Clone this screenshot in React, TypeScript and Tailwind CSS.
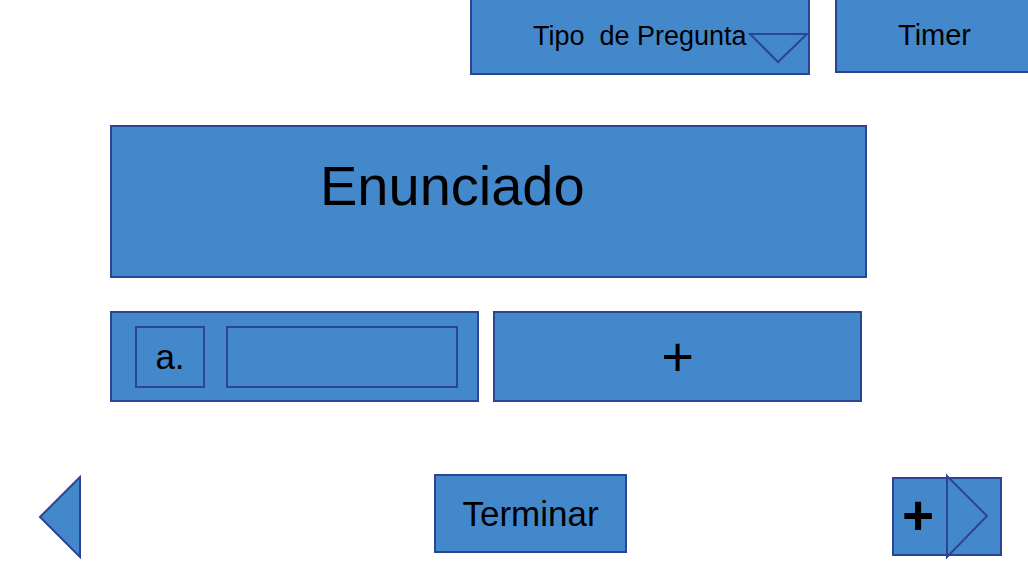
import React from 'react';

// shared look of every block in the mockup
const box = 'bg-[#4488cc] border-2 border-[#2b4594]';

const App: React.FC = () => {
  return (
    <div className="w-[1028px] h-[585px] overflow-hidden bg-white text-black font-['Liberation_Sans',Arial,sans-serif]">
      {/* top bar: question type + timer */}
      <div className="flex items-start -mt-[2px] pl-[470px]">
        <div className={`${box} w-[340px] h-[77px] flex items-center pl-[61px]`}>
          <span className="text-[27px] leading-none whitespace-pre">Tipo  de Pregunta</span>
          <svg width="60" height="32" viewBox="0 0 60 32" className="self-start mt-[33px] ml-[2px] shrink-0 overflow-visible">
            <polygon points="1,1 58,1 29,29" fill="none" stroke="#2b4594" strokeWidth="2" />
          </svg>
        </div>
        <div className={`${box} ml-[25px] w-[230px] h-[75px] shrink-0 flex items-center pl-[61px]`}>
          <span className="text-[29px] leading-none">Timer</span>
        </div>
      </div>

      {/* statement */}
      <div className={`${box} ml-[110px] mt-[50px] w-[757px] h-[153px] pl-[208px] pt-[31px]`}>
        <span className="text-[56px] leading-none">Enunciado</span>
      </div>

      {/* answer row */}
      <div className="flex ml-[110px] mt-[33px] gap-[14px]">
        <div className={`${box} w-[369px] h-[91px] flex items-center pl-[23px] gap-[21px]`}>
          <div className={`${box} w-[70px] h-[62px] flex items-center justify-center`}>
            <span className="text-[35px] leading-none">a.</span>
          </div>
          <div className={`${box} w-[232px] h-[62px]`} />
        </div>
        <div className={`${box} w-[369px] h-[91px] flex items-center justify-center`}>
          <span className="text-[56px] leading-none">+</span>
        </div>
      </div>

      {/* bottom navigation */}
      <div className="flex items-start mt-[72px]">
        <svg width="44" height="84" viewBox="0 0 44 84" className="ml-[38px] mt-[1px]">
          <polygon points="2,42 42,2 42,82" fill="#4488cc" stroke="#2b4594" strokeWidth="2" />
        </svg>
        <div className={`${box} ml-[352px] w-[193px] h-[79px] flex items-center justify-center`}>
          <span className="text-[35px] leading-none">Terminar</span>
        </div>
        <div className={`${box} relative ml-[265px] mt-[3px] w-[110px] h-[79px] flex items-center pl-[8px]`}>
          <span className="text-[55px] font-bold leading-none -mt-[2px]">+</span>
          <svg width="44" height="84" viewBox="0 0 44 84" className="absolute left-[52px] -top-[4px] overflow-visible">
            <polygon points="1,1 41,41 1,82" fill="none" stroke="#2b4594" strokeWidth="2" />
          </svg>
        </div>
      </div>
    </div>
  );
};

export default App;
